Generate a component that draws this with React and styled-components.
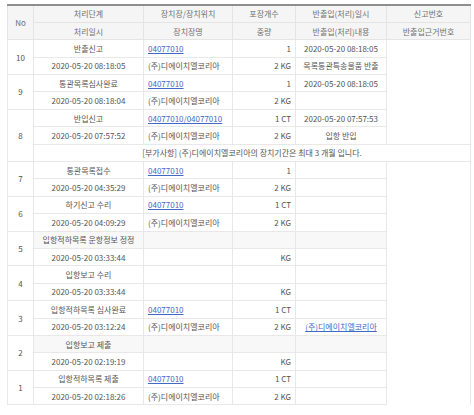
import React from "react";
import styled, { createGlobalStyle } from "styled-components";

const GlobalStyle = createGlobalStyle`
  body {
    margin: 0;
    background: #fff;
    font-family: "Noto Sans CJK KR", "Noto Sans", sans-serif;
  }
`;

const Wrapper = styled.section`
  padding: 4px 0 0 7px;
`;

const Table = styled.table`
  width: 463px;
  table-layout: fixed;
  border-collapse: collapse;
  border-top: 2px solid #8e8e8e;
  font-size: 8px;
  color: #555;
`;

const Row = styled.tr`
  height: 17.4px;
  background: ${(p) => (p.$shade ? "#f8f8f8" : "#fff")};
`;

const Th = styled.th`
  background: #f5f5f5;
  font-weight: normal;
  color: #707070;
  border: 1px solid #e4e4e4;
  border-top: none;
  padding: 0 2px;
  white-space: nowrap;
`;

const Td = styled.td`
  border: 1px solid #e8e8e8;
  padding: 0 ${(p) => (p.$align === "center" ? "2px" : "4px")};
  text-align: ${(p) => p.$align || "center"};
  white-space: nowrap;
  overflow: hidden;
  color: #555;
`;

const NoCell = styled(Td)`
  background: #fff;
`;

const Blank = styled.td`
  border-left: 1px solid #efefef;
  border-right: 1px solid #e8e8e8;
  background: #fff;
`;

const Link = styled.a`
  color: #4467c8;
  text-decoration: underline;
  cursor: pointer;
`;

const groups = [
  { no: 10, step: "반출신고", date: "2020-05-20 08:18:05", loc: "04077010", name: "(주)디에이치엘코리아", cnt: "1", wt: "2 KG", ioDate: "2020-05-20 08:18:05", ioText: "목록통관특송물품 반출" },
  { no: 9, step: "통관목록심사완료", date: "2020-05-20 08:18:04", loc: "04077010", name: "(주)디에이치엘코리아", cnt: "1", wt: "2 KG", ioDate: "2020-05-20 08:18:05", ioText: "" },
  { no: 8, step: "반입신고", date: "2020-05-20 07:57:52", loc: "04077010/04077010", name: "(주)디에이치엘코리아", cnt: "1 CT", wt: "2 KG", ioDate: "2020-05-20 07:57:53", ioText: "입항 반입",
    note: "[부가사항] (주)디에이치엘코리아의 장치기간은 최대 3 개월 입니다." },
  { no: 7, step: "통관목록접수", date: "2020-05-20 04:35:29", loc: "04077010", name: "(주)디에이치엘코리아", cnt: "1", wt: "2 KG" },
  { no: 6, step: "하기신고 수리", date: "2020-05-20 04:09:29", loc: "04077010", name: "(주)디에이치엘코리아", cnt: "1 CT", wt: "2 KG" },
  { no: 5, step: "입항적하목록 운항정보 정정", date: "2020-05-20 03:33:44", wt: "KG", shade: true },
  { no: 4, step: "입항보고 수리", date: "2020-05-20 03:33:44", wt: "KG" },
  { no: 3, step: "입항적하목록 심사완료", date: "2020-05-20 03:12:24", loc: "04077010", name: "(주)디에이치엘코리아", cnt: "1 CT", wt: "2 KG", ioLink: "(주)디에이치엘코리아" },
  { no: 2, step: "입항보고 제출", date: "2020-05-20 02:19:19", wt: "KG", shade: true },
  { no: 1, step: "입항적하목록 제출", date: "2020-05-20 02:18:26", loc: "04077010", name: "(주)디에이치엘코리아", cnt: "1 CT", wt: "2 KG" },
];

function Group({ g }) {
  return (
    <>
      <Row $shade={g.shade}>
        <NoCell rowSpan={g.note ? 3 : 2}>{g.no}</NoCell>
        <Td>{g.step}</Td>
        <Td $align="left">{g.loc && <Link>{g.loc}</Link>}</Td>
        <Td $align="right">{g.cnt}</Td>
        <Td>{g.ioDate}</Td>
        <Blank />
      </Row>
      <Row>
        <Td>{g.date}</Td>
        <Td $align="left">{g.name}</Td>
        <Td $align="right">{g.wt}</Td>
        <Td>{g.ioLink ? <Link>{g.ioLink}</Link> : g.ioText}</Td>
        <Blank />
      </Row>
      {g.note && (
        <Row>
          <Td colSpan={5}>{g.note}</Td>
        </Row>
      )}
    </>
  );
}

export default function App() {
  return (
    <Wrapper>
      <GlobalStyle />
      <Table>
        <colgroup>
          <col style={{ width: 26 }} />
          <col style={{ width: 110 }} />
          <col style={{ width: 89 }} />
          <col style={{ width: 63 }} />
          <col style={{ width: 91 }} />
          <col style={{ width: 84 }} />
        </colgroup>
        <thead>
          <Row>
            <Th rowSpan={2}>No</Th>
            <Th>처리단계</Th>
            <Th>장치장/장치위치</Th>
            <Th>포장개수</Th>
            <Th>반출입(처리)일시</Th>
            <Th>신고번호</Th>
          </Row>
          <Row>
            <Th>처리일시</Th>
            <Th>장치장명</Th>
            <Th>중량</Th>
            <Th>반출입(처리)내용</Th>
            <Th>반출입근거번호</Th>
          </Row>
        </thead>
        <tbody>
          {groups.map((g) => (
            <Group key={g.no} g={g} />
          ))}
        </tbody>
      </Table>
    </Wrapper>
  );
}
